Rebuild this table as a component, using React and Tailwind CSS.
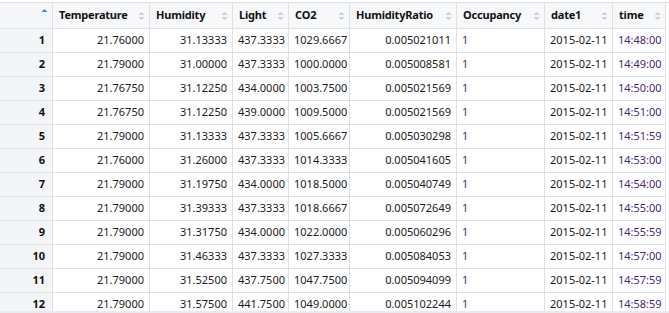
import React from 'react';

const columns = [
  { key: 'Temperature', align: 'right' },
  { key: 'Humidity', align: 'right' },
  { key: 'Light', align: 'left' },
  { key: 'CO2', align: 'left' },
  { key: 'HumidityRatio', align: 'right' },
  { key: 'Occupancy', align: 'left', purple: true },
  { key: 'date1', align: 'left' },
  { key: 'time', align: 'left', purple: true },
];

const rows = [
  ['21.76000', '31.13333', '437.3333', '1029.6667', '0.005021011', '1', '2015-02-11', '14:48:00'],
  ['21.79000', '31.00000', '437.3333', '1000.0000', '0.005008581', '1', '2015-02-11', '14:49:00'],
  ['21.76750', '31.12250', '434.0000', '1003.7500', '0.005021569', '1', '2015-02-11', '14:50:00'],
  ['21.76750', '31.12250', '439.0000', '1009.5000', '0.005021569', '1', '2015-02-11', '14:51:00'],
  ['21.79000', '31.13333', '437.3333', '1005.6667', '0.005030298', '1', '2015-02-11', '14:51:59'],
  ['21.76000', '31.26000', '437.3333', '1014.3333', '0.005041605', '1', '2015-02-11', '14:53:00'],
  ['21.79000', '31.19750', '434.0000', '1018.5000', '0.005040749', '1', '2015-02-11', '14:54:00'],
  ['21.79000', '31.39333', '437.3333', '1018.6667', '0.005072649', '1', '2015-02-11', '14:55:00'],
  ['21.79000', '31.31750', '434.0000', '1022.0000', '0.005060296', '1', '2015-02-11', '14:55:59'],
  ['21.79000', '31.46333', '437.3333', '1027.3333', '0.005084053', '1', '2015-02-11', '14:57:00'],
  ['21.79000', '31.52500', '437.7500', '1047.7500', '0.005094099', '1', '2015-02-11', '14:57:59'],
  ['21.79000', '31.57500', '441.7500', '1049.0000', '0.005102244', '1', '2015-02-11', '14:58:59'],
];

const gridCols = 'grid grid-cols-[53px_97px_83px_56px_61px_107px_88px_68px_53px]';

// little up/down sort carets in the header cells
const SortIcon = ({ active }) => (
  <svg width="7" height="10" viewBox="0 0 7 10" className="shrink-0">
    <path d="M0.5 4 L3.5 1 L6.5 4 Z" fill={active ? '#3d8fd6' : '#c9cdd2'} />
    {!active && <path d="M0.5 6 L3.5 9 L6.5 6 Z" fill="#c9cdd2" />}
  </svg>
);

export default function App() {
  return (
    <div
      className="w-[669px] h-[313px] overflow-hidden bg-white flex flex-col text-[11px] text-[#1c1c1c]"
      style={{ fontFamily: '"Noto Sans", "Open Sans", sans-serif' }}
    >
      <div className="flex-1 overflow-hidden pt-[2px]">
        {/* Header */}
        <div className={`${gridCols} border-t border-[#dde0e4]`}>
          <div className="h-[26px] bg-[#f5f7f9] border-r border-b border-[#dde0e4] flex items-start justify-end pr-[4px] pt-[5px]">
            <SortIcon active />
          </div>
          {columns.map((c) => (
            <div
              key={c.key}
              className="h-[26px] bg-[#f7f8fa] border-r border-b border-[#dde0e4] flex items-center justify-between pl-[6px] pr-[4px]"
            >
              <span className="font-bold text-[#111] tracking-[-0.2px]">{c.key}</span>
              <SortIcon />
            </div>
          ))}
        </div>

        {/* Rows */}
        {rows.map((r, i) => (
          <div key={i} className={gridCols}>
            <div className="h-[24px] bg-[#f3f5f7] border-r border-b border-[#dde0e4] flex items-center justify-end pr-[7px] font-bold text-[#111]">
              {i + 1}
            </div>
            {r.map((v, j) => (
              <div
                key={j}
                className={`h-[24px] border-r border-b border-[#dde0e4] flex items-center px-[5px] whitespace-nowrap overflow-hidden ${
                  columns[j].align === 'right' ? 'justify-end' : 'justify-start'
                } ${columns[j].purple ? 'text-[#4a2c6e]' : ''}`}
              >
                {v}
              </div>
            ))}
          </div>
        ))}
      </div>
      <div className="h-[2px] bg-[#e9ebee]" />
    </div>
  );
}
